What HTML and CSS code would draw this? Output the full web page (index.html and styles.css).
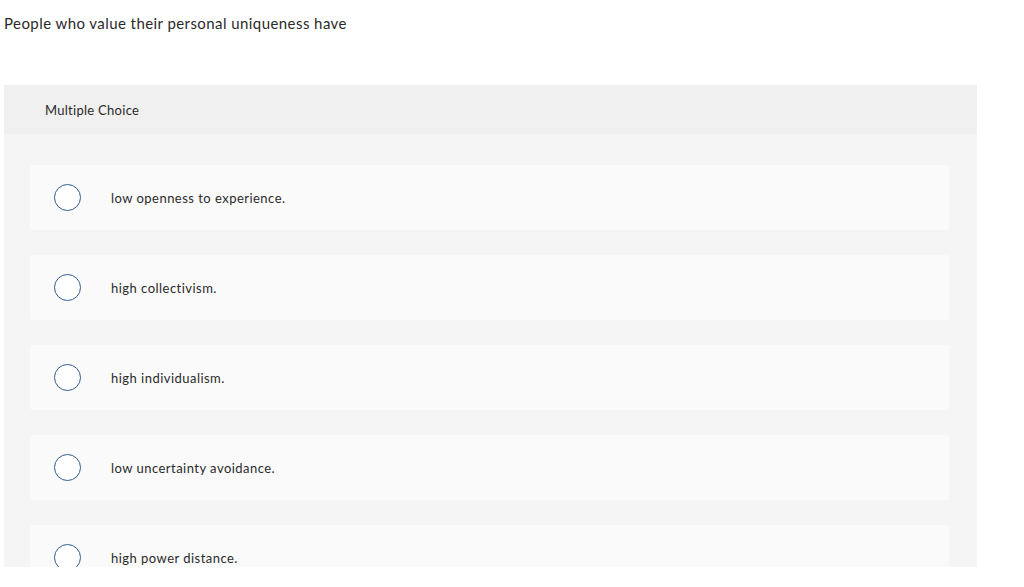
FILE: index.html
```html
<!DOCTYPE html>
<html>
<head>
<meta charset="utf-8">
<link rel="stylesheet" href="styles.css">
</head>
<body>
<div class="viewport">
  <p class="prompt">People who value their personal uniqueness have</p>
  <div class="panel">
    <div class="panel-head">Multiple Choice</div>
    <div class="panel-body">
      <div class="option"><span class="radio"></span><span class="label">low openness to experience.</span></div>
      <div class="option"><span class="radio"></span><span class="label">high collectivism.</span></div>
      <div class="option"><span class="radio"></span><span class="label">high individualism.</span></div>
      <div class="option"><span class="radio"></span><span class="label">low uncertainty avoidance.</span></div>
      <div class="option"><span class="radio"></span><span class="label">high power distance.</span></div>
    </div>
  </div>
</div>
</body>
</html>
```
FILE: styles.css
```css
html, body { margin: 0; padding: 0; background: #fff; }
body { font-family: Lato, "Liberation Sans", sans-serif; color: #2a2a2a; }
.viewport { height: 567px; overflow: hidden; padding: 0 47px 0 4px; }
.prompt { margin: 0; padding-top: 14px; font-size: 15px; line-height: 18px; letter-spacing: 0.43px; }
.panel { margin-top: 53px; background: #f5f5f5; }
.panel-head { background: #f0f0f0; height: 49px; display: flex; align-items: center; padding-left: 41px; font-size: 13px; letter-spacing: 0.28px; }
.panel-body { padding: 31px 28px 20px 26px; display: flex; flex-direction: column; gap: 25px; }
.option { height: 65px; background: #fafafa; border-radius: 3px; display: flex; align-items: center; padding-left: 24px; }
.radio { width: 25px; height: 25px; border: 1.5px solid #2f5b8f; border-radius: 50%; background: #fff; flex: none; }
.label { margin-left: 30px; font-size: 13px; letter-spacing: 0.47px; }
```
